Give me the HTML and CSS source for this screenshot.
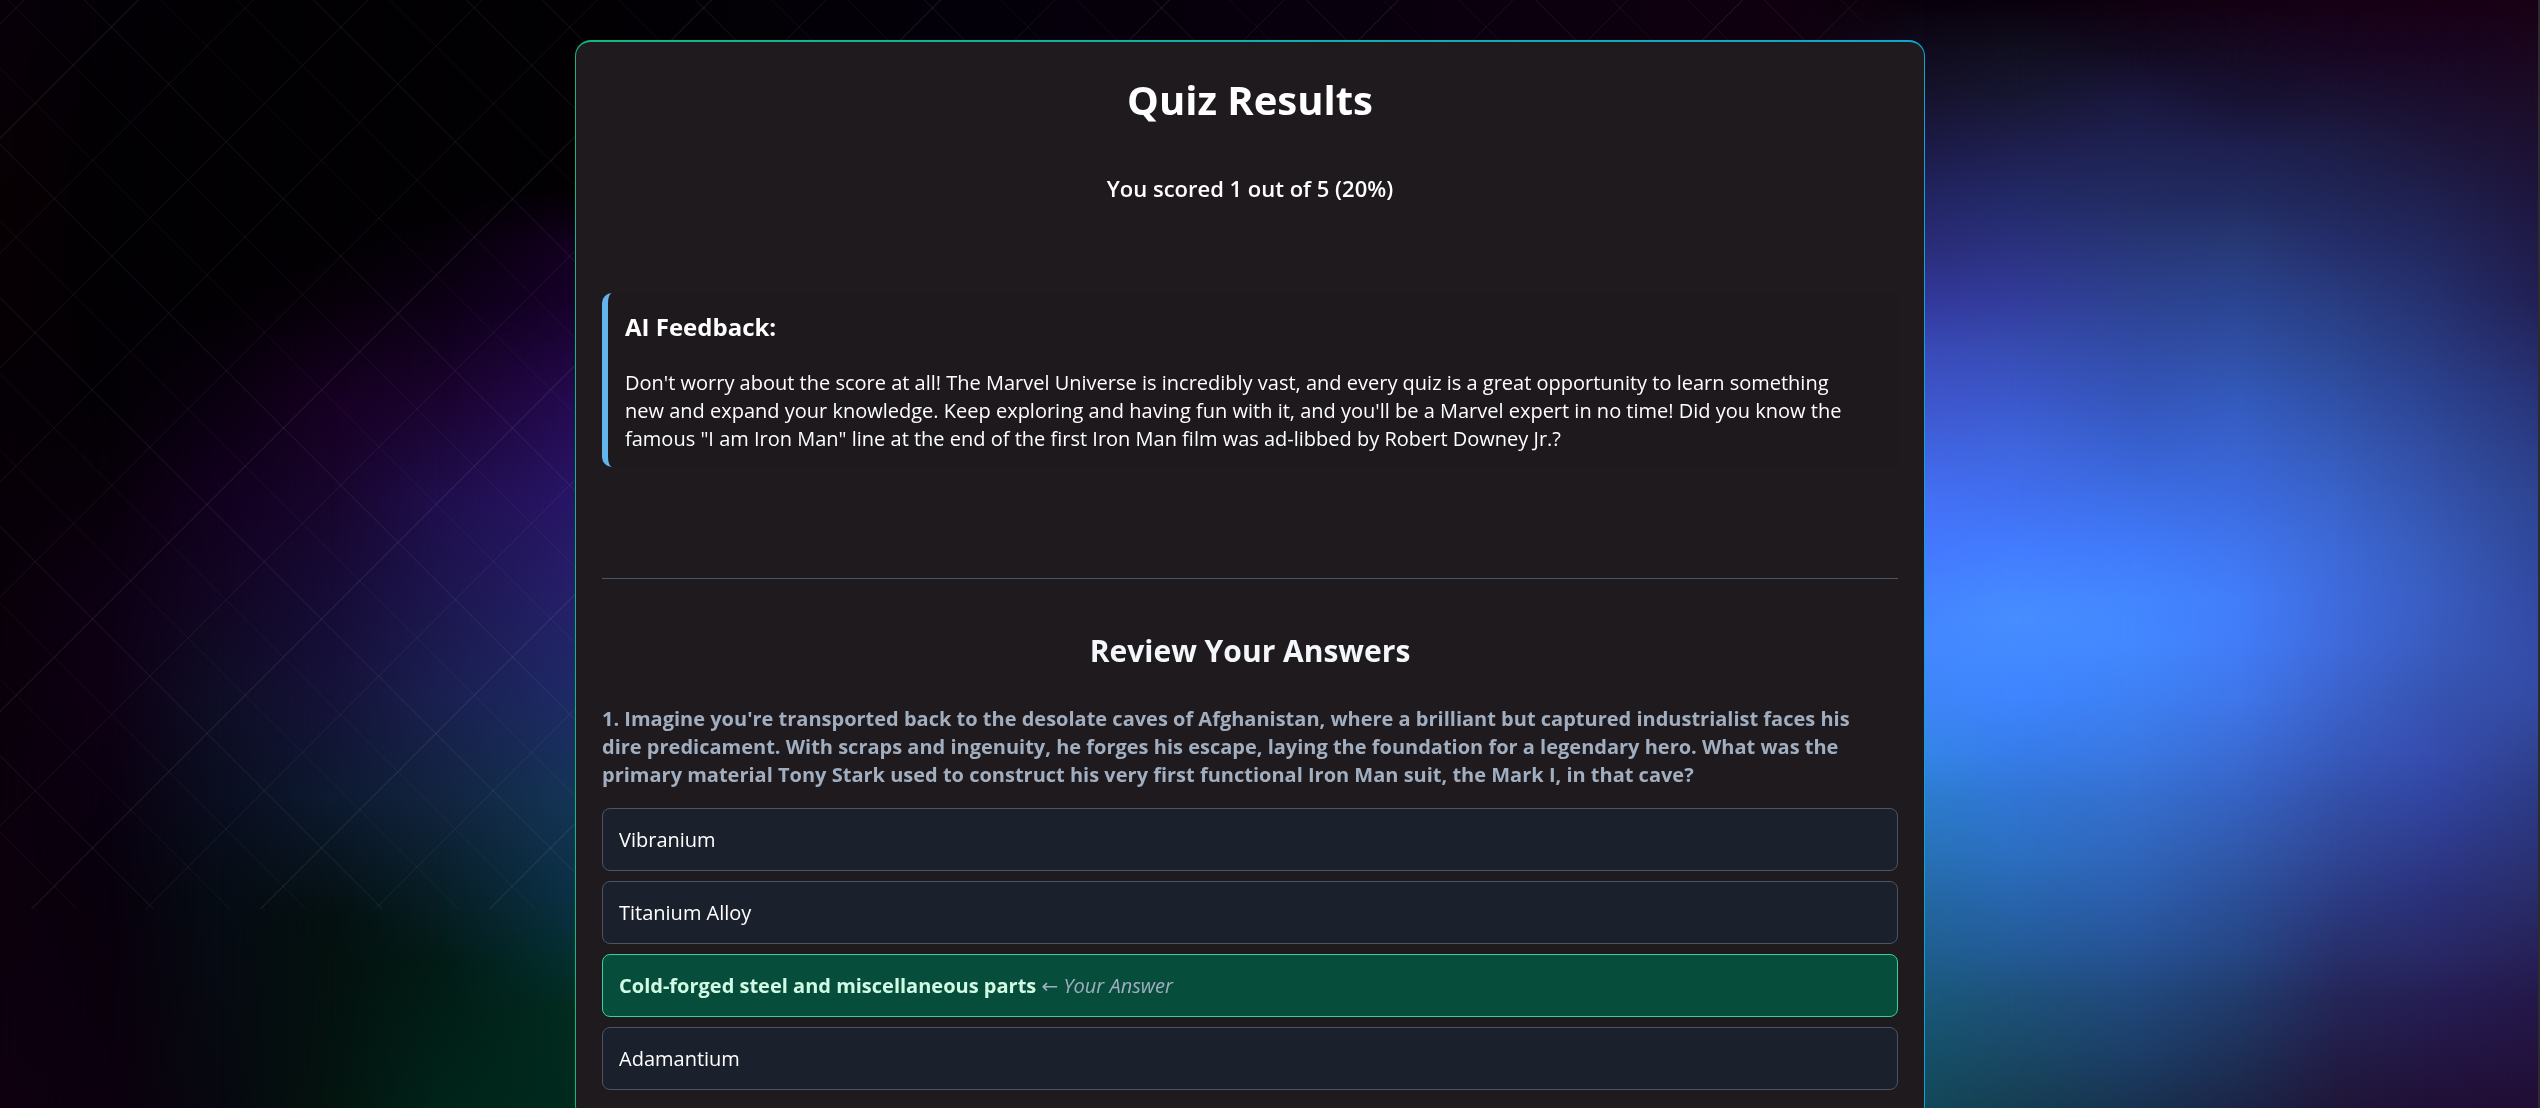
FILE: index.html
```html
<!DOCTYPE html>
<html lang="en">
<head>
<meta charset="utf-8">
<meta name="viewport" content="width=device-width, initial-scale=1">
<title>Quiz Results</title>
<link rel="stylesheet" href="styles.css">
</head>
<body>
<div class="backdrop" aria-hidden="true">
  <div class="glow glow-1"></div>
  <div class="glow glow-2"></div>
  <div class="glow glow-3"></div>
  <div class="glow glow-4"></div>
  <div class="glow glow-5"></div>
  <div class="glow glow-6"></div>
  <div class="glow glow-7"></div>
  <div class="glow glow-8"></div>
  <div class="glow glow-9"></div>
  <div class="glow glow-10"></div>
  <div class="glow glow-11"></div>
  <div class="glow glow-12"></div>
  <div class="glow glow-13"></div>
  <div class="topshade"></div>
  <div class="mesh"></div>
</div>
<main class="page">
  <article class="card">
    <h1 class="title">Quiz Results</h1>
    <p class="score">You scored 1 out of 5 (20%)</p>
    <section class="feedback">
      <h3 class="feedback-title">AI Feedback:</h3>
      <p class="feedback-text">Don't worry about the score at all! The Marvel Universe is incredibly vast, and every quiz is a great opportunity to learn something<br>new and expand your knowledge. Keep exploring and having fun with it, and you'll be a Marvel expert in no time! Did you know the<br>famous "I am Iron Man" line at the end of the first Iron Man film was ad-libbed by Robert Downey Jr.?</p>
    </section>
    <section class="review">
      <h2 class="review-title">Review Your Answers</h2>
      <p class="question">1. Imagine you're transported back to the desolate caves of Afghanistan, where a brilliant but captured industrialist faces his<br>dire predicament. With scraps and ingenuity, he forges his escape, laying the foundation for a legendary hero. What was the<br>primary material Tony Stark used to construct his very first functional Iron Man suit, the Mark I, in that cave?</p>
      <ul class="options">
        <li class="option">Vibranium</li>
        <li class="option">Titanium Alloy</li>
        <li class="option option-correct">Cold-forged steel and miscellaneous parts <span class="your-answer"><span class="arrow">←</span> Your Answer</span></li>
        <li class="option">Adamantium</li>
      </ul>
    </section>
  </article>
</main>
</body>
</html>
```
FILE: styles.css
```css
* { box-sizing: border-box; }

body {
  margin: 0;
  background: #020003;
  color: #fff;
  font-family: "Segoe UI", "Open Sans", "Noto Sans", sans-serif;
  font-size: 20px;
  line-height: 28px;
}

/* Backdrop: vertical colour ramps, each faded into the one to its left */
.backdrop {
  position: fixed;
  inset: 0;
  overflow: hidden;
  border-right: 2px solid #2c2c2c;
}

.glow {
  position: absolute;
  inset: 0;
  mask-image: linear-gradient(90deg, transparent var(--from), #000 var(--to));
}

.glow-1 {
  mask-image: none;
  background: linear-gradient(#08000a, #080004 18%, #060006 36%, #0a000b 63%, #0f0010);
}
.glow-2 {
  --from: 0%; --to: 4.3%;
  background: linear-gradient(#030005, #020003 18%, #030005 36%, #08000a 45%, #0d0014 54%, #0e0014 63%, #0a0010 72%, #08000c 81%, #0c000e);
}
.glow-3 {
  --from: 4.3%; --to: 8.7%;
  background: linear-gradient(#020003 27%, #0a0010 36%, #130020 45%, #120624 54%, #0f0e26 63%, #0a0e20 72%, #060c14 81%, #07080f);
}
.glow-4 {
  --from: 8.7%; --to: 13%;
  background: linear-gradient(#020003 22%, #070009 27%, #170022 36%, #18052c 45%, #160c36 54%, #151238 63%, #0d1a30 72%, #04100f 83%, #04140f);
}
.glow-5 {
  --from: 13%; --to: 17.3%;
  background: linear-gradient(#020003 19%, #0c0014 27%, #1b032e 36%, #1f0e4c 45%, #1d164e 54%, #1a2050 63%, #12243f 72%, #071e25 81%, #021b15 87%, #002419);
}
.glow-6 {
  --from: 17.3%; --to: 22.6%;
  background: linear-gradient(#020003 17%, #140020 22%, #17002a 27%, #240a50 36%, #281566 45%, #25206a 54%, #1e2a66 63%, #143556 72%, #0b3045 81%, #032f2f 87%, #022b20 91%, #002a1e);
}
.glow-7 {
  --from: 22.6%; --to: 75.8%;
  background: linear-gradient(#08000a, #100b1d 4.5%, #17132f 9%, #1c1b48 13.5%, #232564 18%, #2b2d7a 22.5%, #33389b 27%, #3a4ab8 31.5%, #3f55cc 36%, #4163e0 40.5%, #4470f5 45%, #4479ff 49.5%, #4484ff 54%, #4488ff 58.5%, #3f85f8 63%, #3585e8 68%, #2c7cce 72%, #2872b8 77%, #2468a4 81%, #1f5f90 86%, #1a587a 90%, #155068 95%, #134858);
}
.glow-8 {
  --from: 75.8%; --to: 79.5%;
  background: linear-gradient(#0a000c, #100f20 4.5%, #171733 9%, #1f1f50 13.5%, #222a68 18%, #2b3280 22.5%, #323c9a 27%, #374cb2 31.5%, #3b58ca 36%, #3f66de 40.5%, #416ff0 45%, #437cff 49.5%, #468aff 54%, #478eff 56%, #448aff 58.5%, #3e85ff 63%, #377cea 68%, #3175d4 72%, #2c6fc2 77%, #2865ae 81%, #235a96 86%, #1e517a 90%, #1a4866 95%, #163e52);
}
.glow-9 {
  --from: 79.5%; --to: 84.2%;
  background: linear-gradient(#10000f, #120a20 4.5%, #1a1840 9%, #1e2253 13.5%, #222c62 18%, #283779 22.5%, #2d4290 27%, #314ca6 31.5%, #3555ba 36%, #3861d0 40.5%, #3d6ee6 45%, #407afa 49.5%, #4386ff 54%, #4388ff 58%, #3e80f4 63%, #3a78e2 68%, #356fce 72%, #3066bc 77%, #2c5dac 81%, #265294 86%, #21487c 90%, #1c3e68 95%, #193250);
}
.glow-10 {
  --from: 84.2%; --to: 88.2%;
  background: linear-gradient(#140012, #150a22 4.5%, #171233 9%, #1e2050 13.5%, #212b60 18%, #283a78 22.5%, #2a4490 27%, #304fa4 31.5%, #335abc 36%, #3963cf 40.5%, #3c6be0 45%, #4075ee 49.5%, #427dfa 54%, #427cf8 58%, #3f76ea 63%, #3b6bd4 68%, #3562c2 72%, #3158aa 77%, #2b4f98 81%, #264684 86%, #213b6c 90%, #1e3058 95%, #1b2546);
}
.glow-11 {
  --from: 88.2%; --to: 92.1%;
  background: linear-gradient(#160014, #180622 4.5%, #1a1232 9%, #1d1e48 13.5%, #202658 18%, #252f6c 22.5%, #293c80 27%, #2c4692 31.5%, #3050a6 36%, #355ab8 40.5%, #3a63ca 45%, #3d69d6 49.5%, #3f6bdc 54%, #3f6adb 58%, #3c63cc 63%, #375abc 68%, #3450a8 72%, #304695 77%, #2c3c84 81%, #28306c 86%, #252658 90%, #221e48 95%, #201638);
}
.glow-12 {
  --from: 92.1%; --to: 96%;
  background: linear-gradient(#180014, #190522 4.5%, #1b0e2e 9%, #1d173c 13.5%, #1f204e 18%, #22285e 22.5%, #25306e 27%, #29397e 31.5%, #2c4290 36%, #314c9f 40.5%, #3453ac 45%, #375ab8 49.5%, #395cc0 54%, #395abc 58.5%, #3653b0 63%, #364cae 68%, #3144a0 72%, #2e398a 77%, #2a3078 81%, #292866 86%, #251e54 90%, #231644 95%, #200f36);
}
.glow-13 {
  --from: 96%; --to: 100%;
  background: linear-gradient(#180014, #1c0c28 9%, #1e163e 18%, #222054 27%, #283478 36%, #2e4592 45%, #324aa2 54%, #344ca6 59%, #344ba4 63%, #304290 68%, #2c3a84 72%, #292c68 81%, #24184a 90%, #210d34);
}

/* Keeps the band above the card dark */
.topshade {
  position: absolute;
  top: 0;
  left: 22.6%;
  right: 24.2%;
  height: 5%;
  background: linear-gradient(90deg, #020003, #04000a 32%, #0b000e 68%, #10000f 90%, transparent);
}

/* Diagonal line grid over the upper left of the backdrop */
.mesh {
  position: absolute;
  top: 0;
  left: 0;
  width: 73.5%;
  height: 82%;
  background:
    repeating-linear-gradient(45deg, rgba(255, 255, 255, .04) 0 1px, transparent 1px 54px),
    repeating-linear-gradient(-45deg, rgba(255, 255, 255, .06) 0 1px, transparent 1px 81px);
}

.page {
  position: relative;
  height: 100vh;
  overflow: hidden;
  padding: 40px 40px 0 0;
}

.card {
  max-width: 1350px;
  min-height: 100%;
  margin: 0 auto;
  padding: 30px 26px;
  border: 1px solid transparent;
  border-top-width: 2px;
  border-radius: 16px;
  background:
    linear-gradient(#1f1a1d, #1f1a1d) padding-box,
    linear-gradient(90deg, #10b981, #0ea5d0) border-box;
}

.title {
  margin: 0;
  font-size: 40px;
  line-height: 56px;
  font-weight: 700;
  text-align: center;
}

.score {
  margin: 44px 0 0;
  font-size: 22px;
  line-height: 32px;
  font-weight: 600;
  text-align: center;
}

.feedback {
  margin-top: 89px;
  padding: 18px 17px 14px;
  border-left: 6px solid #63b3ed;
  border-radius: 10px;
  background: #1d191c;
}

.feedback-title {
  margin: 0 0 26px;
  font-size: 24px;
  line-height: 32px;
  font-weight: 700;
}

.feedback-text { margin: 0; }

.review {
  margin-top: 111px;
  padding-top: 50px;
  border-top: 1px solid #4a5568;
}

.review-title {
  margin: 0 0 32px;
  color: #f3f6fa;
  font-size: 30px;
  line-height: 44px;
  font-weight: 700;
  text-align: center;
}

.question {
  margin: 0 0 19px;
  color: #a0aec0;
  font-weight: 700;
}

.options {
  display: grid;
  gap: 10px;
  margin: 0;
  padding: 0;
  list-style: none;
}

.option {
  padding: 17px 16px 16px;
  border: 1px solid #4a5568;
  border-radius: 8px;
  background: #1a202c;
}

.option-correct {
  border-color: #34d399;
  background: #064e3b;
  color: #d1fae5;
  font-weight: 700;
}

.your-answer {
  color: #a0aec0;
  font-weight: 400;
  font-style: italic;
}

.arrow {
  font-family: "DejaVu Sans", sans-serif;
  font-style: normal;
  line-height: 1;
}
```
